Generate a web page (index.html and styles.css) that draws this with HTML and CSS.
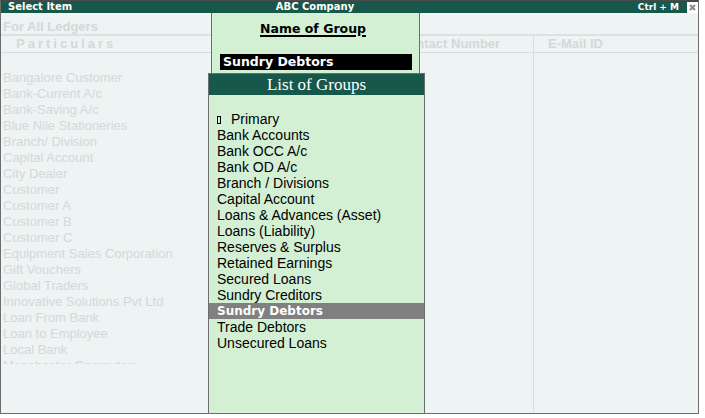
FILE: index.html
```html
<!DOCTYPE html>
<html lang="en">
<head>
  <meta charset="UTF-8">
  <title>Select Item</title>
  <link rel="stylesheet" href="styles.css">
</head>
<body>
  <div class="window">
    <div class="titlebar">
      <span class="title-left">Select Item</span>
      <span class="title-center">ABC Company</span>
      <span class="title-right">
        <span class="shortcut">Ctrl + M</span>
        <svg class="close" width="11" height="11" viewBox="0 0 11 11">
          <rect x="0" y="0" width="11" height="11" fill="#fff"/>
          <path d="M3 3 L8 8 M8 3 L3 8" stroke="#8a8a8a" stroke-width="2"/>
        </svg>
      </span>
    </div>

    <!-- Ledger report behind the popups -->
    <div class="report">
      <div class="report-title">For All Ledgers</div>
      <div class="cols head">
        <div class="col particulars">Particulars</div>
        <div class="col contact">Contact Number</div>
        <div class="col email">E-Mail ID</div>
      </div>
      <div class="cols rows">
        <div class="col">
          <ul class="ledgers">
            <li>Bangalore Customer</li>
            <li>Bank-Current A/c</li>
            <li>Bank-Saving A/c</li>
            <li>Blue Nile Stationeries</li>
            <li>Branch/ Division</li>
            <li>Capital Account</li>
            <li>City Dealer</li>
            <li>Customer</li>
            <li>Customer A</li>
            <li>Customer B</li>
            <li>Customer C</li>
            <li>Equipment Sales Corporation</li>
            <li>Gift Vouchers</li>
            <li>Global Traders</li>
            <li>Innovative Solutions Pvt Ltd</li>
            <li>Loan From Bank</li>
            <li>Loan to Employee</li>
            <li>Local Bank</li>
            <li>Manchester Computers</li>
          </ul>
        </div>
        <div class="col"></div>
        <div class="col email"></div>
      </div>
    </div>

    <!-- Name of Group field -->
    <div class="group-field">
      <div class="group-heading">Name of Group</div>
      <div class="group-value">Sundry Debtors</div>
    </div>

    <!-- List of Groups popup -->
    <div class="group-list">
      <div class="group-list-title">List of Groups</div>
      <ul class="groups">
        <li><span class="marker"></span>Primary</li>
        <li>Bank Accounts</li>
        <li>Bank OCC A/c</li>
        <li>Bank OD A/c</li>
        <li>Branch / Divisions</li>
        <li>Capital Account</li>
        <li>Loans &amp; Advances (Asset)</li>
        <li>Loans (Liability)</li>
        <li>Reserves &amp; Surplus</li>
        <li>Retained Earnings</li>
        <li>Secured Loans</li>
        <li>Sundry Creditors</li>
        <li class="selected">Sundry Debtors</li>
        <li>Trade Debtors</li>
        <li>Unsecured Loans</li>
      </ul>
    </div>
  </div>
</body>
</html>
```

FILE: styles.css
```css
body {
  margin: 0;
  background: #fff;
}
ul {
  list-style: none;
  margin: 0;
  padding: 0;
}
.window {
  position: relative;
  width: 699px;
  height: 414px;
  box-sizing: border-box;
  border: 1px solid #6d6d6d;
  border-top-color: #4a4a4a;
  background: #eef3f3;
  display: flex;
  flex-direction: column;
  overflow: hidden;
}
.titlebar {
  height: 12px;
  background: #17584a;
  color: #fff;
  font: bold 10px/12px "DejaVu Sans", sans-serif;
  display: grid;
  grid-template-columns: 239px 150px 1fr;
}
.title-left {
  padding-left: 7px;
}
.title-center {
  text-align: center;
}
.title-right {
  display: flex;
  justify-content: flex-end;
  align-items: center;
  gap: 8px;
}
.shortcut {
  font-size: 9px;
}
.close {
  display: block;
}
.report {
  flex: 1;
  display: flex;
  flex-direction: column;
  color: #d3d9d9;
  font-family: "Liberation Sans", Arial, sans-serif;
  font-size: 13px;
}
.report-title {
  padding: 6px 2px 0;
  line-height: 15px;
  font-weight: bold;
  border-bottom: 2px solid #dce1e1;
}
.cols {
  display: grid;
  grid-template-columns: 383px 149px 1fr;
}
.head {
  line-height: 16px;
  font-weight: bold;
  border-bottom: 1px solid #d8dede;
}
.head .particulars {
  padding-left: 15px;
  letter-spacing: 3px;
}
.head .contact {
  padding-left: 15px;
}
.head .email {
  padding-left: 14px;
}
.email {
  border-left: 1px solid #d8dede;
}
.rows {
  flex: 1;
}
.ledgers {
  margin-top: 17px;
  padding-left: 2px;
  height: 294px;
  overflow: hidden;
  line-height: 16px;
}
.group-field {
  position: absolute;
  left: 210px;
  top: 12px;
  width: 209px;
  height: 61px;
  box-sizing: border-box;
  border-left: 1px solid #6d6d6d;
  border-right: 1px solid #6d6d6d;
  background: #d4f0d4;
}
.group-heading {
  padding-top: 8px;
  text-align: center;
  font: bold 12.5px/15px "DejaVu Sans", sans-serif;
  text-decoration: underline;
  text-decoration-thickness: 2px;
  text-underline-offset: 2px;
  padding-right: 5px;
}
.group-value {
  margin: 18px 7px 0 8px;
  padding-left: 3px;
  background: #000;
  color: #fff;
  font: bold 12.5px/16px "DejaVu Sans", sans-serif;
}
.group-list {
  position: absolute;
  left: 207px;
  top: 72px;
  width: 217px;
  height: 341px;
  box-sizing: border-box;
  border: 1px solid #6d6d6d;
  background: #d4f0d4;
}
.group-list-title {
  height: 21px;
  background: #17584a;
  color: #fff;
  text-align: center;
  font: 17px/21px "Liberation Serif", "Times New Roman", serif;
}
.groups {
  padding-top: 16px;
  font: 14px/16px "Liberation Sans", Arial, sans-serif;
  color: #000;
}
.groups li {
  padding-left: 8px;
  height: 16px;
}
.groups .selected {
  background: #808080;
  color: #fff;
  font: bold 12px/16px "DejaVu Sans", sans-serif;
}
.marker {
  display: inline-block;
  width: 2px;
  height: 6px;
  border: 1px solid #000;
  margin-right: 10px;
}
```
